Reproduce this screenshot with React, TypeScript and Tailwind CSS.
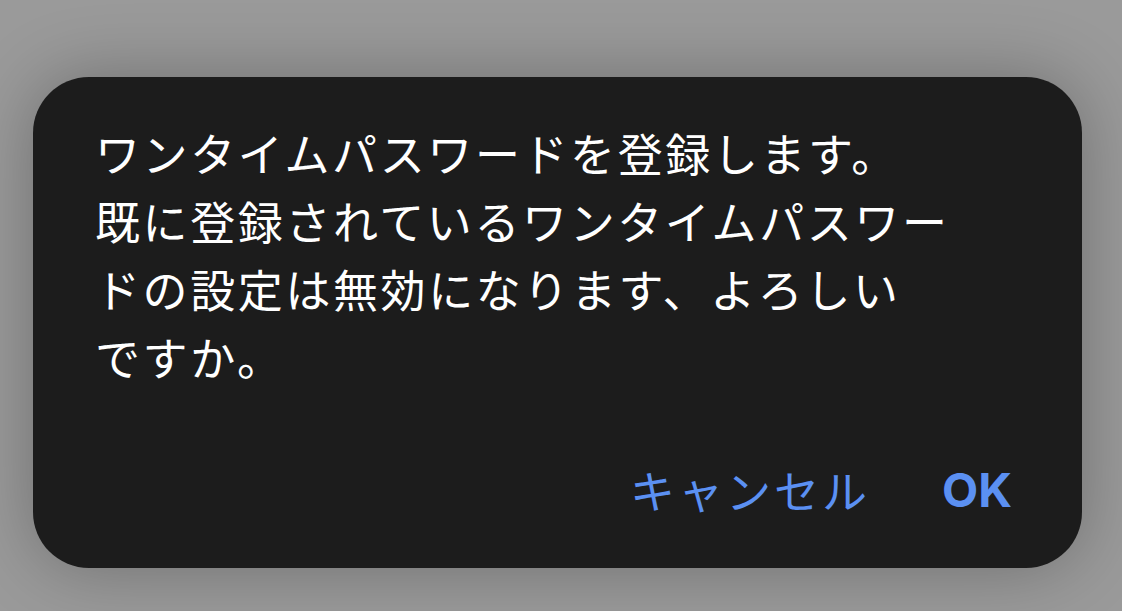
import React from 'react';

const App: React.FC = () => {
  return (
    <div className="w-[1122px] h-[611px] bg-[#9a9a9a] pt-[77px] pl-[33px] pr-[40px] overflow-hidden">
      <div className="h-[491px] bg-[#1c1c1c] rounded-[56px] shadow-[0_0_70px_rgba(0,0,0,0.28)] pt-[42px] pl-[62px] pr-[70px] pb-[44px] flex flex-col justify-between [font-family:'Noto_Sans_CJK_JP',sans-serif]">
        <p className="text-white text-[45px] leading-[68px] tracking-[2.6px]">
          ワンタイムパスワードを登録します。
          <br />
          既に登録されているワンタイムパスワー
          <br />
          ドの設定は無効になります、よろしい
          <br />
          ですか。
        </p>
        <div className="flex justify-end items-center gap-[72px] h-[68px]">
          <button className="text-[#5b90f2] text-[45px] tracking-[3px] leading-[68px]">キャンセル</button>
          <button className="text-[#5b90f2] text-[47px] font-bold leading-[68px] [font-family:Inter,sans-serif]">OK</button>
        </div>
      </div>
    </div>
  );
};

export default App;
